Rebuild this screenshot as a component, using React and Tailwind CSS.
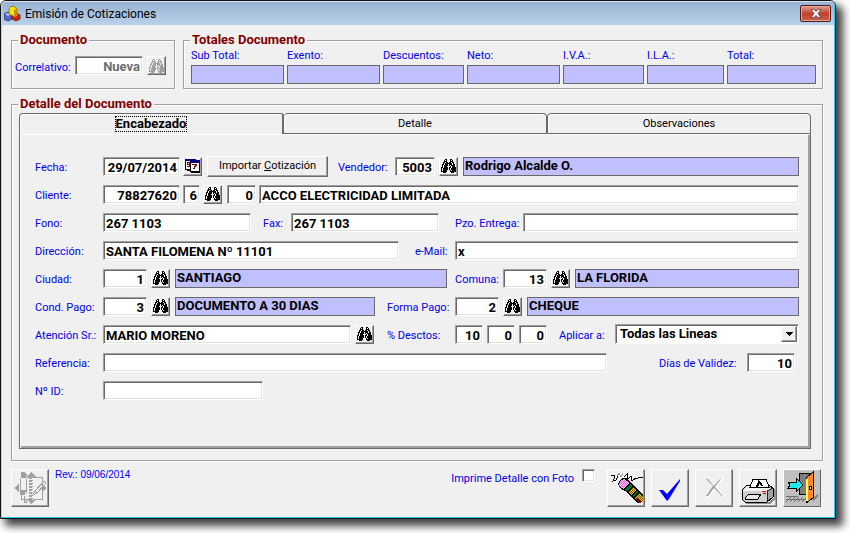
import React from "react";

const PALETTE = { "#": "#000000", g: "#a0a0a0", w: "#ffffff", n: "#000080", r: "#800000", c: "#c0c0c0" };

function Pixels({ rows, tint }) {
  const width = Math.max(...rows.map((r) => r.length));
  return (
    <svg width={width} height={rows.length} viewBox={`0 0 ${width} ${rows.length}`} shapeRendering="crispEdges" aria-hidden="true">
      {rows.flatMap((row, y) =>
        [...row].map((ch, x) =>
          PALETTE[ch] ? <rect key={`${x}-${y}`} x={x} y={y} width="1" height="1" fill={tint && ch === "#" ? tint : PALETTE[ch]} /> : null
        )
      )}
    </svg>
  );
}

const BINOCULARS = [
  "....##...##....",
  "...#.#...#.#...",
  "...###...###...",
  "..##.##.##.##..",
  "..#.#######.#..",
  ".##.###.###.##.",
  ".#.####.#.####.",
  ".#.###...#.###.",
  "##.####.##.####",
  "#.#####.#.#####",
  "#.#####.#.#####",
  "#.####...#.####",
  "######...######",
  "..###.....###..",
];

const CALENDAR = [
  "nnnnnnnnnnn....",
  "nnnnnnnnnnnnnnn",
  "#wwwwnnnnnnnnnn",
  "#wrrr#nnnnnnnnn",
  "#wrwr#wwwwwwww#",
  "#wrrr#wrrrrrww#",
  "#wwwr#wwwwrrww#",
  "#wrrr#wwwrrwww#",
  "#wwww#wwwrwwww#",
  "#wwww#wwrrwwww#",
  "######wwwwwwww#",
  "..####wwwwwwww#",
  ".....##########",
  "......#########",
];

const raised =
  "flex shrink-0 items-center justify-center border border-t-white border-l-white border-r-[#696969] border-b-[#696969] bg-[#f0f0f0] shadow-[inset_-1px_-1px_0_#a0a0a0]";
const sunken =
  "h-[19px] min-w-0 rounded-none border border-t-[#a0a0a0] border-l-[#a0a0a0] border-r-white border-b-white bg-white px-0.5 pt-0.5 text-[13px] font-bold shadow-[inset_1px_1px_0_#696969,inset_-1px_-1px_0_#e3e3e3] outline-none";

function Field({ className, right, ...rest }) {
  return <input type="text" className={`${sunken} text-black ${right ? "text-right" : ""} ${className}`} {...rest} />;
}

function Readout({ className = "flex-1", children }) {
  return (
    <output className={`block h-[19px] min-w-0 truncate border border-[#696969] bg-[#c0c0ff] px-px text-[13px] leading-[15px] font-bold text-black ${className}`}>
      {children}
    </output>
  );
}

function Find({ label, disabled }) {
  return (
    <button type="button" aria-label={label} disabled={disabled} className={`${raised} h-[19px] w-[19px]`}>
      <Pixels rows={BINOCULARS} tint={disabled ? "#a0a0a0" : null} />
    </button>
  );
}

function Label({ className = "", ...rest }) {
  return <label className={`shrink-0 pt-1 whitespace-nowrap text-[#0000e8] ${className}`} {...rest} />;
}

function Row({ children }) {
  return <div className="flex h-5 items-center">{children}</div>;
}

function Group({ title, className, children }) {
  return (
    <fieldset className={`min-w-0 border border-[#a0a0a0] shadow-[1px_1px_0_#fff,inset_1px_1px_0_#fff] ${className}`}>
      <legend className="ml-1.5 bg-[#f0f0f0] px-0.5 text-[13px] leading-3 font-bold text-[#800000]">{title}</legend>
      {children}
    </fieldset>
  );
}

function AppIcon() {
  return (
    <svg width="17" height="16" viewBox="0 0 17 16" aria-hidden="true">
      <path d="m0 8 4-2 4 2v5l-4 2-4-2z" fill="#5468c8" stroke="#20206a" strokeWidth=".7" />
      <path d="m1 8 3-1 3 1-3 2z" fill="#c3cbf5" />
      <path d="m8 9 4-2 4 2v4l-4 2-4-2z" fill="#c82808" stroke="#601000" strokeWidth=".7" />
      <path d="m9 9 3-1 2 1-3 2z" fill="#ff8a60" />
      <path d="m5 3 2-2.500h3L13 3v5l-3 2.500L5 8z" fill="#ffe000" stroke="#7a6400" strokeWidth=".7" />
      <path d="M10 4v6l3-2V3z" fill="#c89000" />
    </svg>
  );
}

function NotesIcon() {
  return (
    <svg width="34" height="34" viewBox="0 0 34 34" shapeRendering="crispEdges" aria-hidden="true">
      <g fill="none" stroke="#a0a0a0">
        <path d="M12 6.500H29.500V28.500H8.500V24M7.500 8v16M13.500 8v14M11.500 25v6h2v-3" />
        <path d="m20 24 2-4 9-10 2 2-9 10zM22 20l2 2" />
      </g>
      <path d="M18 1l5 5h-9zM18 33l5-5h-9zM1 17l5-5v10zM33 17l-4-4v8zM8 1h4l2 3-2 3H8zM8 19h5l-1 5H8z" fill="#a0a0a0" />
      <path d="M18 6v23" stroke="#a0a0a0" strokeWidth="4" strokeDasharray="2 1" />
      <path d="M19 7v22" stroke="#fff" strokeDasharray="1 2" />
    </svg>
  );
}

function EraserIcon() {
  return (
    <svg width="36" height="36" viewBox="0 0 36 36" shapeRendering="crispEdges" aria-hidden="true">
      <defs>
        <pattern id="gold" width="2" height="2" patternUnits="userSpaceOnUse">
          <path d="M0 0h2v2H0z" fill="#e8c830" />
          <path d="M0 0h1v1H0zM1 1h1v1H1z" fill="#6a5000" />
        </pattern>
        <pattern id="rubber" width="2" height="2" patternUnits="userSpaceOnUse">
          <path d="M0 0h2v2H0z" fill="#ffb8ff" />
          <path d="M0 0h1v1H0zM1 1h1v1H1z" fill="#e070d8" />
        </pattern>
      </defs>
      <path d="M3 5h3v4l-1 2 3-1 2-4" fill="none" stroke="#000" />
      <path d="m9 6 2-3 2 4 2-4" fill="none" stroke="#a0a0a0" />
      <path d="m16 7 3-3v6l4-4 1 5 4-3 1 1 2-2h4" fill="none" stroke="#000" />
      <path d="m10 14 2-4 3-2h4l16 17v7l-5 1-13-12-5-3z" fill="#000" />
      <path d="m11 14 2-4 3-1 3 2 2 2-5 6-4-2z" fill="url(#rubber)" />
      <path d="m17 20 5-6 2 2-5 6z" fill="#007828" />
      <path d="m20 22 5-5 3 3-5 5z" fill="url(#gold)" />
      <path d="m24 26 5-5 1 1-5 5z" fill="#007828" />
      <path d="m26 28 5-5 4 4v5h-5z" fill="url(#gold)" />
      <path d="m29 29 4 4" stroke="#800000" strokeWidth="2" />
    </svg>
  );
}

function PrinterIcon() {
  return (
    <svg width="36" height="36" viewBox="0 0 36 36" shapeRendering="crispEdges" aria-hidden="true">
      <path d="M5 32h24l5-5v-9l2 3v7l-6 6H6z" fill="#909090" />
      <path d="m2 20 5-5h22l4 3v9l-6 5H5l-3-3z" fill="#d0d0d0" stroke="#000" />
      <path d="m3 20 4-4h21l3 2-4 3H3z" fill="#f4f4f4" />
      <path d="M10 17 13 9h13l3 8z" fill="#fff" stroke="#000" />
      <path d="M16 16c3 0 3-5 2-5M19 11l3 5" fill="none" stroke="#000" strokeWidth="2" />
      <path d="M27 21v10l6-4v-9z" fill="#a0a0a0" stroke="#000" strokeWidth=".8" />
      <path d="m5 28 4-4h12l-3 5H5z" fill="#e8e8e8" stroke="#000" />
      <path d="M22 21h4M23 23h3" stroke="#e00000" />
    </svg>
  );
}

function ExitIcon() {
  return (
    <svg width="36" height="36" viewBox="0 0 36 36" shapeRendering="crispEdges" aria-hidden="true">
      <path d="M0 0h36v36H0z" fill="#c0c0c0" />
      <path d="M2 26h12M2 32l5-5M6 32l5-5M10 32l5-5M14 32l5-5M18 32l4-4M2 29h20" stroke="#707070" />
      <path d="m29 31 5-5v-3l-5 5z" fill="#808080" />
      <path d="M15 3h12v21H15z" fill="#808080" stroke="#000" />
      <path d="m22 8 7-6v26l-7 5z" fill="#ff8830" stroke="#000" />
      <path d="M23 9v22" stroke="#ffff50" strokeWidth="2" />
      <path d="M25 16h2v3h-2z" fill="#fff" stroke="#000" />
      <path d="M4 12h8V8l7 7-7 7v-4H4l2-3z" fill="#20e8f0" stroke="#000" />
    </svg>
  );
}

const TOTALS = ["Sub Total:", "Exento:", "Descuentos:", "Neto:", "I.V.A.:", "I.L.A.:", "Total:"];

function Tool({ label, children, disabled }) {
  return (
    <button type="button" aria-label={label} disabled={disabled} className={`${raised} h-[38px] w-[38px]`}>
      {children}
    </button>
  );
}

export default function App() {
  return (
    <div className="min-h-screen bg-white pr-3.5 pb-3.5 font-['Roboto','Liberation_Sans',sans-serif] text-[11px] leading-3">
      <main className="rounded-t-md border border-[#101418] bg-[#f0f0f0] shadow-[6px_6px_8px_1px_rgba(0,0,0,0.75)]">
        <div className="rounded-t-[5px] border border-t-[#d5e3f2] border-r-[#30c8f0] border-b-[#30c8f0] border-l-[#b9d1ea]">
          <header className="flex h-[23px] items-center gap-1 rounded-t-[4px] bg-linear-to-b from-[#97b2d2] to-[#b9d1ea] pr-[3px] pl-0.5">
            <AppIcon />
            <h1 className="flex-1 text-[12px] leading-4 text-black">Emisión de Cotizaciones</h1>
            <button
              type="button"
              aria-label="Cerrar"
              className="flex h-[17px] w-[31px] items-center justify-center rounded-[2px] border border-[#501818] bg-linear-to-b from-[#e0a090] via-[#c04028] to-[#c86048] shadow-[inset_0_0_0_1px_#e0a89c]"
            >
              <svg width="12" height="9" viewBox="0 0 12 9" aria-hidden="true">
                <path d="M1 .5h3l2 2 2-2h3L8 4.500l3 4H8l-2-2-2 2H1l3-4z" fill="#f4f4f4" stroke="#504858" strokeWidth=".8" />
              </svg>
            </button>
          </header>

          <div className="pt-[9px] pr-[11px] pb-2.5 pl-[9px]">
            <div className="flex gap-2">
              <Group title="Documento" className="h-[55px] w-[164px] shrink-0">
                <div className="flex items-center pt-2.5 pl-[3px]">
                  <Label htmlFor="corr" className="w-[60px]">Correlativo:</Label>
                  <input id="corr" type="text" disabled defaultValue="Nueva" className={`${sunken} mr-1 w-[68px] text-right text-[#6d6d6d]`} />
                  <Find label="Buscar documento" disabled />
                </div>
              </Group>
              <Group title="Totales Documento" className="h-[55px] flex-1">
                <div className="grid grid-cols-[93fr_93fr_81fr_93fr_81fr_77fr_89fr] gap-[3px] pt-1 pr-1.5 pl-[7px]">
                  {TOTALS.map((t) => (
                    <div key={t} className="flex flex-col gap-[3px] text-[#0000e8]">
                      <span>{t}</span>
                      <Readout className="w-full" />
                    </div>
                  ))}
                </div>
              </Group>
            </div>

            <Group title="Detalle del Documento" className="mt-[9px] pb-[11px]">
              <div className="pt-[3px] pr-[11px] pl-[7px]">
                <div role="tablist" className="flex h-[21px] text-[11px] text-black">
                  <button type="button" role="tab" aria-selected="true" className="flex flex-1 items-center justify-center rounded-tl-[4px] rounded-tr-[3px] border-t border-r-2 border-l border-[#696969] shadow-[inset_1px_1px_0_#fff]">
                    <span className="border border-dotted border-black text-[13px] leading-[14px] font-bold">Encabezado</span>
                  </button>
                  <button type="button" role="tab" aria-selected="false" className="flex-1 rounded-t-[4px] border border-l-0 border-[#696969] shadow-[inset_1px_1px_0_#fff]">Detalle</button>
                  <button type="button" role="tab" aria-selected="false" className="flex-1 rounded-t-[4px] border border-[#696969] shadow-[inset_1px_1px_0_#fff]">Observaciones</button>
                </div>
                <div role="tabpanel" className="flex flex-col gap-2 border-r border-b border-l border-[#696969] pt-[22px] pr-[11px] pb-12 pl-[15px] shadow-[inset_1px_1px_0_#fff,inset_-2px_-2px_0_#a0a0a0]">
                  <Row>
                    <Label htmlFor="fecha" className="w-[68px]">Fecha:</Label>
                    <Field id="fecha" right className="mr-[3px] w-[77px]" defaultValue="29/07/2014" />
                    <button type="button" aria-label="Calendario" className={`${raised} mr-[5px] h-[19px] w-[19px]`}><Pixels rows={CALENDAR} /></button>
                    <button type="button" className={`${raised} mr-2.5 h-[21px] w-[121px] text-black`}><span>Importar <u>C</u>otización</span></button>
                    <Label htmlFor="vend" className="mr-px w-14">Vendedor:</Label>
                    <Field id="vend" right className="mr-1 w-10" defaultValue="5003" />
                    <Find label="Buscar vendedor" />
                    <Readout className="ml-[5px] flex-1">Rodrigo Alcalde O.</Readout>
                  </Row>
                  <Row>
                    <Label htmlFor="cli" className="w-[68px]">Cliente:</Label>
                    <Field id="cli" right className="mr-[3px] w-[77px]" defaultValue="78827620" />
                    <Field aria-label="Dígito verificador" right className="mr-[3px] w-[17px]" defaultValue="6" />
                    <Find label="Buscar cliente" />
                    <Field aria-label="Sucursal" right className="mr-[3px] ml-[5px] w-[29px]" defaultValue="0" />
                    <Field aria-label="Nombre del cliente" className="flex-1" defaultValue="ACCO ELECTRICIDAD LIMITADA" />
                  </Row>
                  <Row>
                    <Label htmlFor="fono" className="w-[68px]">Fono:</Label>
                    <Field id="fono" className="mr-3 w-[148px]" defaultValue="267 1103" />
                    <Label htmlFor="fax" className="w-7">Fax:</Label>
                    <Field id="fax" className="mr-4 w-[148px]" defaultValue="267 1103" />
                    <Label htmlFor="pzo" className="w-[68px]">Pzo. Entrega:</Label>
                    <Field id="pzo" className="flex-1" />
                  </Row>
                  <Row>
                    <Label htmlFor="dir" className="w-[68px]">Dirección:</Label>
                    <Field id="dir" className="mr-4 w-[296px]" defaultValue="SANTA FILOMENA Nº 11101" />
                    <Label htmlFor="mail" className="w-10">e-Mail:</Label>
                    <Field id="mail" className="flex-1" defaultValue="x" />
                  </Row>
                  <Row>
                    <Label htmlFor="ciu" className="w-[68px]">Ciudad:</Label>
                    <Field id="ciu" right className="mr-1 w-11" defaultValue="1" />
                    <Find label="Buscar ciudad" />
                    <Readout className="mr-2 ml-[5px] w-[272px]">SANTIAGO</Readout>
                    <Label htmlFor="com" className="w-12">Comuna:</Label>
                    <Field id="com" right className="mr-1 w-11" defaultValue="13" />
                    <Find label="Buscar comuna" />
                    <Readout className="ml-[5px] flex-1">LA FLORIDA</Readout>
                  </Row>
                  <Row>
                    <Label htmlFor="cond" className="w-[68px]">Cond. Pago:</Label>
                    <Field id="cond" right className="mr-1 w-11" defaultValue="3" />
                    <Find label="Buscar condición de pago" />
                    <Readout className="mr-3 ml-[5px] w-[200px]">DOCUMENTO A 30 DIAS</Readout>
                    <Label htmlFor="forma" className="w-[68px]">Forma Pago:</Label>
                    <Field id="forma" right className="mr-1 w-11" defaultValue="2" />
                    <Find label="Buscar forma de pago" />
                    <Readout className="ml-[5px] flex-1">CHEQUE</Readout>
                  </Row>
                  <Row>
                    <Label htmlFor="aten" className="w-[68px]">Atención Sr.:</Label>
                    <Field id="aten" className="mr-1 w-[248px]" defaultValue="MARIO MORENO" />
                    <Find label="Buscar contacto" />
                    <Label htmlFor="desc" className="ml-[13px] w-[68px]">% Desctos:</Label>
                    <Field id="desc" right className="mr-1 w-7" defaultValue="10" />
                    <Field aria-label="Segundo descuento" right className="mr-1 w-7" defaultValue="0" />
                    <Field aria-label="Tercer descuento" right className="mr-3 w-7" defaultValue="0" />
                    <Label htmlFor="apl" className="w-14">Aplicar a:</Label>
                    <div className="relative flex-1">
                      <select id="apl" className="block h-5 w-full appearance-none rounded-none border border-t-[#a0a0a0] border-r-white border-b-white border-l-[#a0a0a0] bg-white px-1 text-[13px] leading-4 font-bold text-black shadow-[inset_1px_1px_0_#696969]">
                        <option>Todas las Lineas</option>
                      </select>
                      <span className={`${raised} pointer-events-none absolute top-0.5 right-0.5 h-4 w-4`}>
                        <svg width="7" height="4" viewBox="0 0 7 4" shapeRendering="crispEdges" aria-hidden="true"><path d="M0 0h7L3.500 4z" /></svg>
                      </span>
                    </div>
                  </Row>
                  <Row>
                    <Label htmlFor="ref" className="w-[68px]">Referencia:</Label>
                    <Field id="ref" className="mr-auto w-[504px]" />
                    <Label htmlFor="dias" className="w-[88px]">Días de Validez:</Label>
                    <Field id="dias" right className="mr-1 w-12" defaultValue="10" />
                  </Row>
                  <Row>
                    <Label htmlFor="nid" className="w-[68px]">Nº ID:</Label>
                    <Field id="nid" className="w-40" />
                  </Row>
                </div>
              </div>
            </Group>

            <footer className="mt-2 flex items-start gap-1.5 pr-0.5">
              <Tool label="Notas" disabled><NotesIcon /></Tool>
              <span className="flex-1 font-['Liberation_Sans',sans-serif] text-[10px] text-[#0000ff]">Rev.: 09/06/2014</span>
              <Label htmlFor="foto">Imprime Detalle con Foto</Label>
              <input id="foto" type="checkbox" className="mr-1.5 ml-0.5 h-[13px] w-[13px] appearance-none border border-t-[#a0a0a0] border-r-white border-b-white border-l-[#a0a0a0] bg-white shadow-[inset_1px_1px_0_#696969,inset_-1px_-1px_0_#e3e3e3]" />
              <Tool label="Limpiar"><EraserIcon /></Tool>
              <Tool label="Aceptar">
                <svg width="36" height="36" viewBox="0 0 36 36" aria-hidden="true"><path d="M7 20h4l4 4L28 9v2L17 29l-2 2z" fill="#0000ff" /></svg>
              </Tool>
              <Tool label="Cancelar" disabled>
                <svg width="36" height="36" viewBox="0 0 36 36" aria-hidden="true">
                  <path d="m11 10 3 0 5 6 6-7h2l-6 8 8 9-2 1-8-8-6 8h-3l7-10z" fill="#fff" />
                  <path d="m10 9 2 0 6 7 6-7h1l-6 8 8 9-1 0-8-8-6 8h-2l7-10z" fill="#a0a0a0" />
                </svg>
              </Tool>
              <Tool label="Imprimir"><PrinterIcon /></Tool>
              <Tool label="Salir"><ExitIcon /></Tool>
            </footer>
          </div>
        </div>
      </main>
    </div>
  );
}
